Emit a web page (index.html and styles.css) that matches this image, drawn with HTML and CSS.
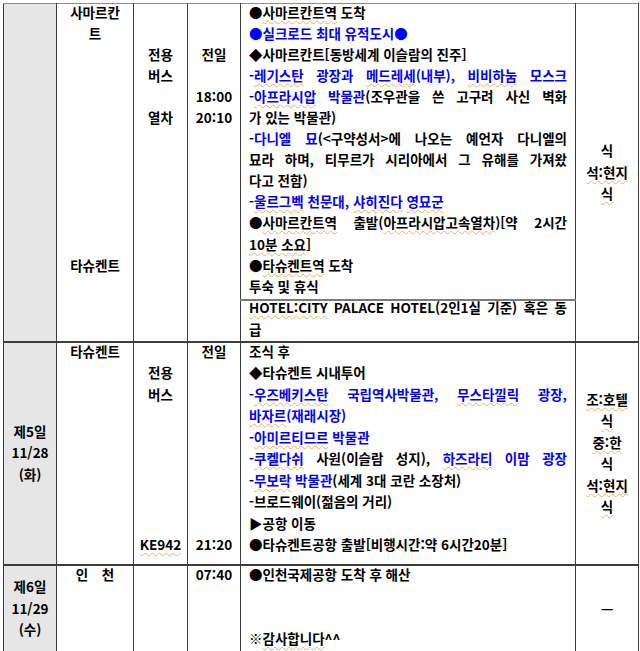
FILE: index.html
```html
<!DOCTYPE html>
<html lang="ko">
<head>
<meta charset="utf-8">
<title>일정표</title>
<link rel="stylesheet" href="styles.css">
</head>
<body>
<table class="plan">
  <colgroup>
    <col class="c-day">
    <col class="c-place">
    <col class="c-trans">
    <col class="c-time">
    <col class="c-sched">
    <col class="c-meal">
  </colgroup>
  <tr class="r1a">
    <td class="day" rowspan="2"></td>
    <td class="place" rowspan="2">
      <div class="l">사마르칸</div>
      <div class="l">트</div>
      <div class="l"></div><div class="l"></div><div class="l"></div><div class="l"></div><div class="l"></div>
      <div class="l"></div><div class="l"></div><div class="l"></div><div class="l"></div><div class="l"></div>
      <div class="l">타슈켄트</div>
    </td>
    <td class="trans" rowspan="2">
      <div class="l"></div><div class="l"></div>
      <div class="l">전용</div>
      <div class="l">버스</div>
      <div class="l"></div>
      <div class="l">열차</div>
    </td>
    <td class="time" rowspan="2">
      <div class="l"></div><div class="l"></div>
      <div class="l">전일</div>
      <div class="l"></div>
      <div class="l">18:00</div>
      <div class="l">20:10</div>
    </td>
    <td class="sched">
      <div class="l">●<span class="sq">사마르칸트역</span> 도착</div>
      <div class="l b">●실크로드 최대 유적도시●</div>
      <div class="l">◆사마르칸트[동방세계 이슬람의 진주]</div>
      <div class="l j">-<span class="b"><span class="sq">레기스탄</span> 광장과 <span class="sq">메드레세</span>(내부), <span class="sq">비비하눔</span> 모스크</span></div>
      <div class="l j">-<span class="b"><span class="sq">아프라시압</span> 박물관</span>(조우관을 쓴 고구려 사신 벽화</div>
      <div class="l">가 있는 박물관)</div>
      <div class="l j">-<span class="b">다니엘 묘</span>(&lt;구약성서&gt;에 나오는 예언자 다니엘의</div>
      <div class="l j">묘라 하며, 티무르가 시리아에서 그 유해를 가져왔</div>
      <div class="l">다고 전함)</div>
      <div class="l">-<span class="b"><span class="sq">울르그벡</span> 천문대, <span class="sq">샤히진다</span> <span class="sq">영묘군</span></span></div>
      <div class="l j"><span class="word">●<span class="sq">사마르칸트역</span></span> <span class="word">출발(<span class="sq">아프라시압고속열차</span>)[약</span> 2시간</div>
      <div class="l"><span class="sq">10분 소요</span>]</div>
      <div class="l">●<span class="sq">타슈켄트역</span> 도착</div>
      <div class="l">투숙 및 휴식</div>
    </td>
    <td class="meal" rowspan="2">식<br><span class="sq">석:현지</span><br><span class="sq">식</span></td>
  </tr>
  <tr class="r1b">
    <td class="sched hotel">
      <div class="l j"><span class="sq">HOTEL:CITY</span> PALACE HOTEL(2인1실 기준) 혹은 동</div>
      <div class="l">급</div>
    </td>
  </tr>
  <tr class="r2">
    <td class="day">제5일<br>11/28<br>(화)</td>
    <td class="place"><div class="l">타슈켄트</div></td>
    <td class="trans">
      <div class="l"></div>
      <div class="l">전용</div>
      <div class="l">버스</div>
      <div class="l"></div><div class="l"></div><div class="l"></div><div class="l"></div><div class="l"></div><div class="l"></div>
      <div class="l"><span class="sq">KE942</span></div>
    </td>
    <td class="time">
      <div class="l">전일</div>
      <div class="l"></div><div class="l"></div><div class="l"></div><div class="l"></div><div class="l"></div><div class="l"></div><div class="l"></div><div class="l"></div>
      <div class="l">21:20</div>
    </td>
    <td class="sched">
      <div class="l">조식 후</div>
      <div class="l">◆타슈켄트 시내투어</div>
      <div class="l j">-<span class="b"><span class="sq">우즈베키스탄</span> 국립역사박물관, <span class="sq">무스타낄릭</span> 광장,</span></div>
      <div class="l b"><span class="sq">바자르</span>(재래시장)</div>
      <div class="l">-<span class="b"><span class="sq">아미르티므르</span> 박물관</span></div>
      <div class="l j"><span class="word">-<span class="b sq">쿠켈다쉬</span></span> <span class="word">사원(이슬람</span> 성지), <span class="b"><span class="sq">하즈라티</span> 이맘 광장</span></div>
      <div class="l">-<span class="b"><span class="sq">무보락</span> 박물관</span>(세계 3대 코란 소장처)</div>
      <div class="l">-브로드웨이(젊음의 거리)</div>
      <div class="l">▶공항 이동</div>
      <div class="l">●타슈켄트공항 출발[비행시간:약 6시간20분]</div>
    </td>
    <td class="meal"><span class="sq">조:호텔</span><br><span class="sq">식</span><br><span class="sq">중:한</span><br>식<br><span class="sq">석:현지</span><br><span class="sq">식</span></td>
  </tr>
  <tr class="r3">
    <td class="day">제6일<br>11/29<br>(수)</td>
    <td class="place"><div class="l">인&emsp;천</div></td>
    <td class="trans"></td>
    <td class="time"><div class="l">07:40</div></td>
    <td class="sched">
      <div class="l">●인천국제공항 도착 후 해산</div>
      <div class="l"></div><div class="l"></div>
      <div class="l">※<span class="sq">감사합니다</span>^^</div>
    </td>
    <td class="meal dash">—</td>
  </tr>
</table>
</body>
</html>
```

FILE: styles.css
```css
html, body {
  margin: 0;
  padding: 0;
  background: #ffffff;
}

body {
  font-family: "Noto Sans CJK KR", "Noto Sans", sans-serif;
  font-size: 13.5px;
  font-weight: bold;
  color: #000000;
}

.plan {
  border-collapse: collapse;
  table-layout: fixed;
  width: 635px;
  margin: 3px 0 0 3px;
}

.c-day { width: 53px; }
.c-place { width: 77px; }
.c-trans { width: 54px; }
.c-time { width: 53px; }
.c-sched { width: 335px; }
.c-meal { width: 63px; }

.plan td {
  border: 1px solid #3d3d3d;
  padding: 0 8px;
  vertical-align: top;
}

.r1a td { border-top-color: #8c8c8c; }

.r1a { height: 295px; }
.r1b { height: 40px; }
.r2 { height: 223px; }
.r3 { height: 81px; }

.r2 td, .r3 td { border-top-width: 2px; }

.r3 td { border-bottom-width: 2px; }

.plan td.hotel { border-top: 2px solid #7a7a7a; }

.plan td.day {
  background: #e6e6e6;
  text-align: center;
  vertical-align: middle;
  line-height: 21.5px;
  padding: 0;
}

.plan td.place,
.plan td.trans,
.plan td.time {
  text-align: center;
  padding: 0 2px;
}

.plan td.meal {
  text-align: center;
  vertical-align: middle;
  line-height: 21.5px;
  padding: 0 4px;
}

.dash { font-size: 14px; }

.l {
  height: 21.5px;
  line-height: 16px;
}

.r1a .l { height: 21.05px; }

.hotel .l { height: 22px; line-height: 12px; }

.hotel .l + .l { height: 18px; }

.j {
  text-align: justify;
  text-align-last: justify;
}

.word { display: inline-block; }

.b { color: #0000ff; }

.sq {
  text-decoration: underline wavy #eeb060;
  text-decoration-thickness: 1px;
  text-underline-offset: 2px;
}
```
